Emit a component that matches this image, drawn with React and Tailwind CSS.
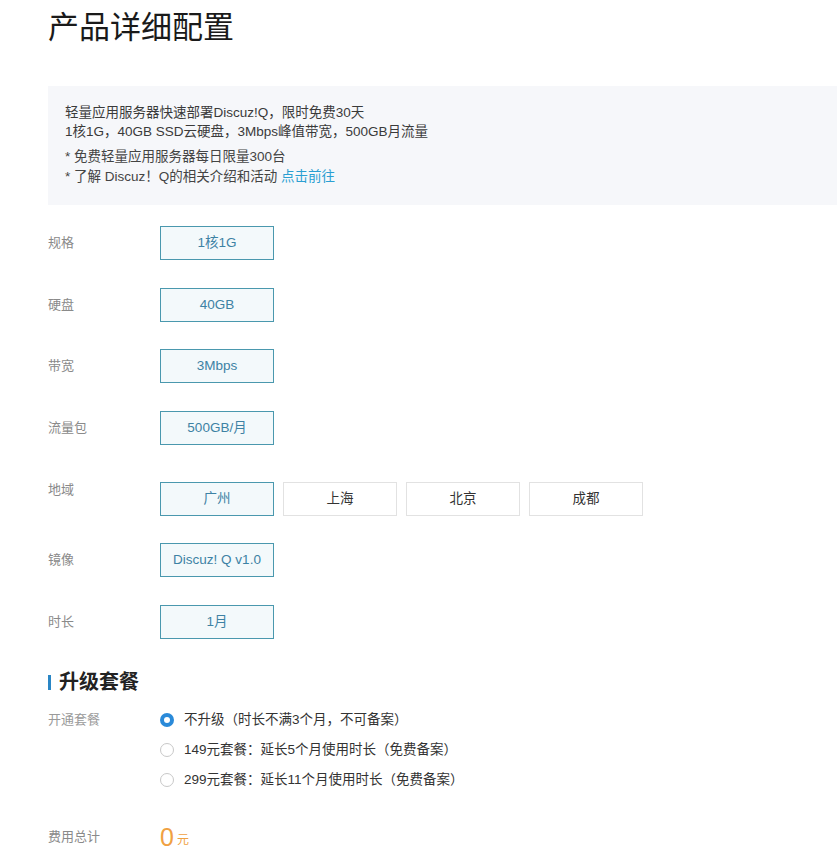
import React from "react";

const font = "font-['Liberation_Sans','Noto_Sans_CJK_SC',sans-serif]";

function OptionBox({ children, active = true }) {
  return (
    <div
      className={
        "flex h-[34px] w-[114px] items-center justify-center border text-[13.5px] " +
        (active
          ? "border-[#4a98ae] bg-[#f3f9fb] text-[#3d82a4]"
          : "border-[#e2e2e2] bg-white text-[#333]")
      }
    >
      {children}
    </div>
  );
}

function Row({ label, children, className = "", top = false }) {
  return (
    <div className={"flex " + (top ? "items-start" : "items-center") + " " + className}>
      <div className="w-[112px] shrink-0 text-[13px] leading-[16px] text-[#8a8a8a]">{label}</div>
      {children}
    </div>
  );
}

function Radio({ checked }) {
  if (checked) {
    return (
      <span className="flex h-[14px] w-[14px] items-center justify-center rounded-full bg-[#2a8ad9]">
        <span className="h-[6px] w-[6px] rounded-full bg-white" />
      </span>
    );
  }
  return <span className="h-[14px] w-[14px] rounded-full border border-[#c8c8c8] bg-white" />;
}

export default function App() {
  const plans = [
    { text: "不升级（时长不满3个月，不可备案）", checked: true },
    { text: "149元套餐：延长5个月使用时长（免费备案）", checked: false },
    { text: "299元套餐：延长11个月使用时长（免费备案）", checked: false },
  ];

  return (
    <div className={"min-h-[854px] w-full overflow-hidden bg-white pl-[48px] " + font}>
      <h1 className="pt-[8px] text-[31px] leading-[40px] font-normal text-[#1a1a1a]">产品详细配置</h1>

      {/* notice box */}
      <div className="mt-[38px] bg-[#f6f7fa] pt-[17px] pb-[18px] pl-[17px] text-[13.5px] text-[#3a3a3a]">
        <p className="leading-[19px]">轻量应用服务器快速部署Discuz!Q，限时免费30天</p>
        <p className="leading-[19px]">1核1G，40GB SSD云硬盘，3Mbps峰值带宽，500GB月流量</p>
        <p className="mt-[6px] leading-[20px] text-[#444]">* 免费轻量应用服务器每日限量300台</p>
        <p className="leading-[20px] text-[#444]">
          * 了解 Discuz！Q的相关介绍和活动 <span className="text-[#2b9fd2]">点击前往</span>
        </p>
      </div>

      {/* configuration */}
      <Row label="规格" className="mt-[21px]">
        <OptionBox>1核1G</OptionBox>
      </Row>
      <Row label="硬盘" className="mt-[28px]">
        <OptionBox>40GB</OptionBox>
      </Row>
      <Row label="带宽" className="mt-[27px]">
        <OptionBox>3Mbps</OptionBox>
      </Row>
      <Row label="流量包" className="mt-[28px]">
        <OptionBox>500GB/月</OptionBox>
      </Row>
      <Row label="地域" className="mt-[37px]" top>
        <div className="flex gap-[9px]">
          <OptionBox>广州</OptionBox>
          <OptionBox active={false}>上海</OptionBox>
          <OptionBox active={false}>北京</OptionBox>
          <OptionBox active={false}>成都</OptionBox>
        </div>
      </Row>
      <Row label="镜像" className="mt-[27px]">
        <OptionBox>Discuz! Q v1.0</OptionBox>
      </Row>
      <Row label="时长" className="mt-[28px]">
        <OptionBox>1月</OptionBox>
      </Row>

      {/* upgrade plans */}
      <div className="mt-[31px] flex items-center">
        <span className="h-[15px] w-[3px] bg-[#2a86c5]" />
        <h2 className="ml-[8px] text-[20px] leading-[24px] font-bold text-[#222]">升级套餐</h2>
      </div>

      <div className="mt-[11px] flex">
        <div className="w-[112px] shrink-0 pt-[7px] text-[13px] leading-[16px] text-[#9a9a9a]">开通套餐</div>
        <div className="flex flex-col">
          {plans.map((p) => (
            <div key={p.text} className="flex h-[30px] items-center">
              <Radio checked={p.checked} />
              <span className="ml-[10px] text-[13.5px] text-[#333]">{p.text}</span>
            </div>
          ))}
        </div>
      </div>

      <div className="mt-[27px] flex h-[30px] items-center">
        <div className="w-[112px] shrink-0 text-[13px] text-[#8a8a8a]">费用总计</div>
        <span className="text-[25px] leading-[30px] text-[#f0a142]">0</span>
        <span className="ml-[3px] mt-[6px] text-[12px] text-[#f0a142]">元</span>
      </div>
    </div>
  );
}
